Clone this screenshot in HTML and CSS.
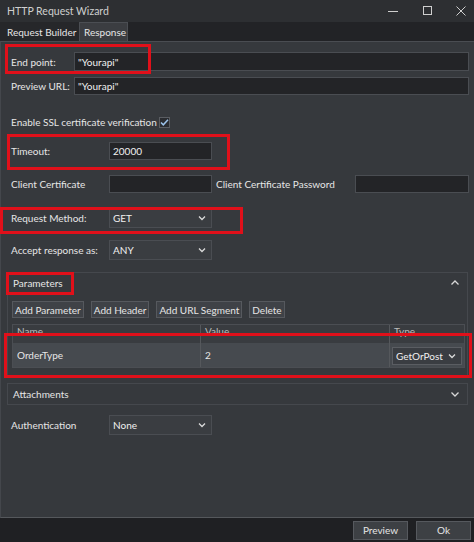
FILE: index.html
```html
<!DOCTYPE html>
<html lang="en">
<head>
    <meta charset="UTF-8">
    <title>HTTP Request Wizard</title>
    <link rel="stylesheet" href="styles.css">
</head>
<body>
    <div class="window">
        <div class="titlebar">
            <span class="title">HTTP Request Wizard</span>
            <div class="controls">
                <svg width="12" height="12" viewBox="0 0 12 12"><path d="M1 6.5h10" stroke="#cfcfcf" stroke-width="1"/></svg>
                <svg width="12" height="12" viewBox="0 0 12 12"><rect x="2.5" y="1.5" width="8" height="8" fill="none" stroke="#cfcfcf" stroke-width="1"/></svg>
                <svg width="12" height="12" viewBox="0 0 12 12"><path d="M1.5 1.5l9 9M10.5 1.5l-9 9" stroke="#cfcfcf" stroke-width="1"/></svg>
            </div>
        </div>

        <div class="tabs">
            <div class="tab active">Request Builder</div>
            <div class="tab">Response</div>
        </div>

        <div class="panel">
            <div class="row r-endpoint">
                <label class="lbl short">End point:</label>
                <div class="input wide">"Yourapi"</div>
            </div>
            <div class="row r-preview">
                <label class="lbl short">Preview URL:</label>
                <div class="input wide">"Yourapi"</div>
            </div>
            <div class="row r-ssl">
                <label class="lbl ssl">Enable SSL certificate verification</label>
                <span class="check">
                    <svg width="9" height="9" viewBox="0 0 9 9"><path d="M1 4.5l2.3 2.3L8 1.8" fill="none" stroke="#9cc3ea" stroke-width="1.5"/></svg>
                </span>
            </div>
            <div class="row r-timeout">
                <label class="lbl">Timeout:</label>
                <div class="input field">20000</div>
            </div>
            <div class="row r-cert">
                <label class="lbl">Client Certificate</label>
                <div class="input field"></div>
                <label class="lbl pass">Client Certificate Password</label>
                <div class="input passfield"></div>
            </div>
            <div class="row r-method">
                <label class="lbl">Request Method:</label>
                <div class="select field">GET <svg class="chev" width="8" height="6" viewBox="0 0 8 6"><path d="M1 1.5l3 3 3-3" fill="none" stroke="#dadada" stroke-width="1.3"/></svg></div>
            </div>
            <div class="row r-accept">
                <label class="lbl">Accept response as:</label>
                <div class="select field">ANY <svg class="chev" width="8" height="6" viewBox="0 0 8 6"><path d="M1 1.5l3 3 3-3" fill="none" stroke="#dadada" stroke-width="1.3"/></svg></div>
            </div>

            <div class="section params">
                <div class="section-head">
                    <span>Parameters</span>
                    <svg width="10" height="10" viewBox="0 0 10 10"><path d="M1.5 6.5L5 3l3.5 3.5" fill="none" stroke="#d8d8d8" stroke-width="1.3"/></svg>
                </div>
                <div class="buttons">
                    <button class="btn">Add Parameter</button>
                    <button class="btn">Add Header</button>
                    <button class="btn">Add URL Segment</button>
                    <button class="btn">Delete</button>
                </div>
                <div class="grid">
                    <div class="cell head">Name</div>
                    <div class="cell head">Value</div>
                    <div class="cell head">Type</div>
                    <div class="cell">OrderType</div>
                    <div class="cell">2</div>
                    <div class="cell type">
                        <div class="select mini">GetOrPost <svg class="chev" width="8" height="6" viewBox="0 0 8 6"><path d="M1 1.5l3 3 3-3" fill="none" stroke="#dadada" stroke-width="1.3"/></svg></div>
                    </div>
                </div>
            </div>

            <div class="section attach">
                <div class="section-head">
                    <span>Attachments</span>
                    <svg width="10" height="10" viewBox="0 0 10 10"><path d="M1.5 3.5L5 7l3.5-3.5" fill="none" stroke="#d8d8d8" stroke-width="1.3"/></svg>
                </div>
            </div>

            <div class="row r-auth">
                <label class="lbl">Authentication</label>
                <div class="select field">None <svg class="chev" width="8" height="6" viewBox="0 0 8 6"><path d="M1 1.5l3 3 3-3" fill="none" stroke="#dadada" stroke-width="1.3"/></svg></div>
            </div>

            <!-- annotation boxes -->
            <div class="mark m-endpoint"></div>
            <div class="mark m-timeout"></div>
            <div class="mark m-method"></div>
            <div class="mark m-params"></div>
            <div class="mark m-grid"></div>
        </div>

        <div class="footer">
            <button class="btn foot">Preview</button>
            <button class="btn foot ok">Ok</button>
        </div>
    </div>
</body>
</html>
```

FILE: styles.css
```css
body {
    margin: 0;
    font-family: Lato, "Noto Sans", sans-serif;
    font-size: 10px;
    color: #e6e6e6;
    background: #1f2023;
    white-space: nowrap;
}
.window {
    width: 474px;
    height: 542px;
    display: flex;
    flex-direction: column;
}
.titlebar {
    height: 22px;
    flex-shrink: 0;
    background: #2d2f32;
    display: flex;
    align-items: center;
    justify-content: space-between;
    padding-left: 7px;
    font-size: 10.5px;
}
.title {
    color: #cfcfcf;
}
.controls {
    display: flex;
    gap: 22px;
    padding-right: 7px;
}
.tabs {
    height: 19px;
    flex-shrink: 0;
    background: #222326;
    display: flex;
    align-items: stretch;
    font-size: 10px;
}
.tab {
    padding: 0 6px;
    display: flex;
    align-items: center;
    border: 1px solid transparent;
    border-bottom: none;
    box-sizing: border-box;
}
.tab.active {
    width: 79px;
    background: #26272a;
}
.tab:not(.active) {
    background: #3b3d41;
    border-color: #4b4e53;
    width: 49px;
    padding: 0 4px;
}
.panel {
    position: relative;
    flex: 1;
    background: #36393d;
    border-top: 1px solid #4a4d52;
    border-left: 1px solid #44474c;
    border-bottom: 1px solid #55585c;
    padding-top: 10px;
    display: flex;
    flex-direction: column;
}
.row {
    display: flex;
    align-items: center;
    height: 18px;
    padding-left: 10px;
}
.lbl {
    width: 98px;
    flex-shrink: 0;
}
.lbl.short {
    width: 63px;
}
.lbl.ssl {
    width: 148px;
}
.lbl.pass {
    width: 139px;
    margin-left: 4px;
}
.input, .select {
    height: 100%;
    box-sizing: border-box;
    flex-shrink: 0;
    background: #232427;
    border: 1px solid #4a4d52;
    display: flex;
    align-items: center;
    padding-left: 3px;
    color: #f0f0f0;
}
.input.wide {
    width: 395px;
}
.field {
    width: 103px;
}
.passfield {
    width: 114px;
}
.select {
    background: #3a3d41;
    justify-content: space-between;
    padding-right: 5px;
}
.check {
    width: 11px;
    height: 11px;
    box-sizing: border-box;
    background: #2a2c30;
    border: 1px solid #5a5d62;
    display: flex;
    align-items: center;
    justify-content: center;
}
.r-endpoint { height: 19px; }
.r-preview { margin-top: 6px; }
.r-ssl { margin-top: 19px; height: 16px; }
.r-timeout { margin-top: 12px; }
.r-cert { margin-top: 15px; }
.r-method { margin-top: 15px; height: 20px; }
.r-accept { margin-top: 12px; height: 20px; }
.r-auth { margin-top: 10px; height: 20px; }

.section {
    margin: 12px 6px 0 6px;
    border: 1px solid #45484d;
}
.section-head {
    height: 20px;
    display: flex;
    align-items: center;
    justify-content: space-between;
    padding: 0 7px 0 5px;
}
.attach {
    margin-top: 6px;
}
.buttons {
    display: flex;
    gap: 7px;
    margin-top: 8px;
    padding-left: 4px;
}
.btn {
    font-family: inherit;
    font-size: 10px;
    color: #e6e6e6;
    background: #3f4247;
    border: 1px solid #56595e;
    height: 17px;
    padding: 0 2px;
    display: flex;
    align-items: center;
}
.grid {
    margin: 6px 2px 8px 4px;
    display: grid;
    grid-template-columns: 188px 189px 1fr;
    grid-template-rows: 18px 24px;
    border: 1px solid #4b4e53;
}
.cell {
    display: flex;
    align-items: center;
    padding-left: 4px;
    border-right: 1px solid #55585c;
    background: #464a4f;
}
.cell:nth-child(3n) {
    border-right: none;
}
.cell.head {
    background: #393c40;
    color: #bdbdbd;
    align-items: flex-start;
}
.cell.type {
    padding: 3px 2px 2px 2px;
}
.select.mini {
    width: 100%;
    height: 18px;
    background: #3a3d42;
    border-color: #5a5d62;
}
.footer {
    height: 24px;
    display: flex;
    justify-content: flex-end;
    align-items: center;
    gap: 8px;
    padding-right: 3px;
    background: #1f2023;
}
.btn.foot {
    height: 19px;
    width: 55px;
    justify-content: center;
    background: #3d4044;
}
.mark {
    position: absolute;
    border: 3px solid #e0101a;
    box-sizing: border-box;
}
.m-endpoint { left: 4px; top: 2px; width: 146px; height: 30px; }
.m-timeout { left: 6px; top: 92px; width: 223px; height: 36px; }
.m-method { left: -1px; top: 165px; width: 243px; height: 27px; }
.m-params { left: 5px; top: 230px; width: 68px; height: 23px; }
.m-grid { left: 3px; top: 291px; width: 468px; height: 45px; }
```
